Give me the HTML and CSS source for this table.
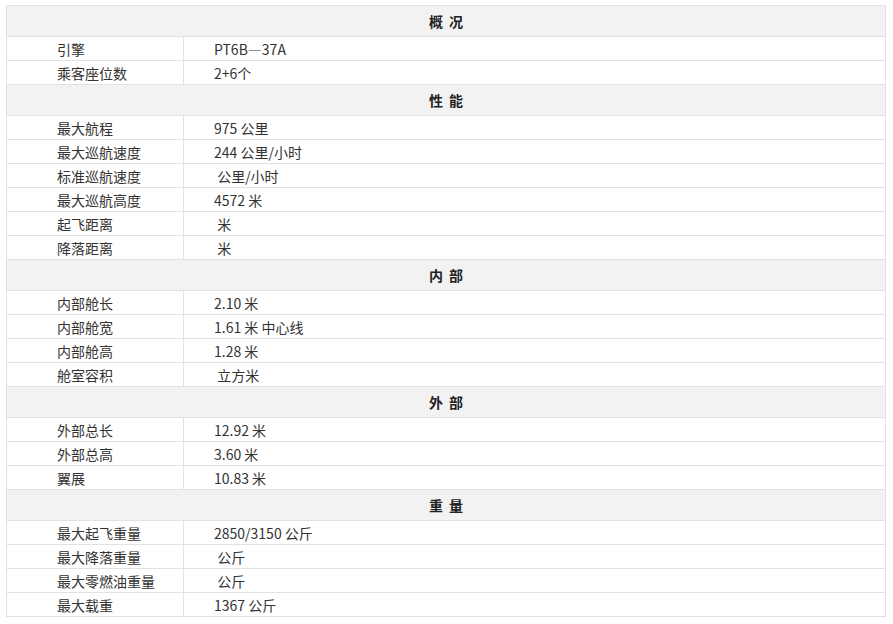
FILE: index.html
```html
<!DOCTYPE html>
<html lang="zh">
<head>
<meta charset="utf-8">
<link rel="stylesheet" href="styles.css">
</head>
<body>
<table class="spec">
  <tr class="sec"><th colspan="2">概 况</th></tr>
  <tr><td class="k">引擎</td><td class="v">PT6B—37A</td></tr>
  <tr><td class="k">乘客座位数</td><td class="v">2+6个</td></tr>
  <tr class="sec"><th colspan="2">性 能</th></tr>
  <tr><td class="k">最大航程</td><td class="v">975 公里</td></tr>
  <tr><td class="k">最大巡航速度</td><td class="v">244 公里/小时</td></tr>
  <tr><td class="k">标准巡航速度</td><td class="v">&nbsp;公里/小时</td></tr>
  <tr><td class="k">最大巡航高度</td><td class="v">4572 米</td></tr>
  <tr><td class="k">起飞距离</td><td class="v">&nbsp;米</td></tr>
  <tr><td class="k">降落距离</td><td class="v">&nbsp;米</td></tr>
  <tr class="sec"><th colspan="2">内 部</th></tr>
  <tr><td class="k">内部舱长</td><td class="v">2.10 米</td></tr>
  <tr><td class="k">内部舱宽</td><td class="v">1.61 米 中心线</td></tr>
  <tr><td class="k">内部舱高</td><td class="v">1.28 米</td></tr>
  <tr><td class="k">舱室容积</td><td class="v">&nbsp;立方米</td></tr>
  <tr class="sec"><th colspan="2">外 部</th></tr>
  <tr><td class="k">外部总长</td><td class="v">12.92 米</td></tr>
  <tr><td class="k">外部总高</td><td class="v">3.60 米</td></tr>
  <tr><td class="k">翼展</td><td class="v">10.83 米</td></tr>
  <tr class="sec"><th colspan="2">重 量</th></tr>
  <tr><td class="k">最大起飞重量</td><td class="v">2850/3150 公斤</td></tr>
  <tr><td class="k">最大降落重量</td><td class="v">&nbsp;公斤</td></tr>
  <tr><td class="k">最大零燃油重量</td><td class="v">&nbsp;公斤</td></tr>
  <tr><td class="k">最大载重</td><td class="v">1367 公斤</td></tr>
</table>
</body>
</html>
```
FILE: styles.css
```css
html, body {
  margin: 0;
  background: #fff;
}
body {
  padding: 5px 0 0 6px;
  font-family: "Noto Sans CJK SC", "Microsoft YaHei", sans-serif;
  font-size: 14px;
  color: #333;
}
.spec {
  width: 880px;
  border-collapse: collapse;
  border: 1px solid #e2e2e2;
}
.spec td, .spec th {
  border: 1px solid #e2e2e2;
  padding: 0;
  line-height: 22px;
  height: 24px;
  box-sizing: border-box;
}
.spec tr.sec th {
  height: 31px;
  background: #f2f2f2;
  font-weight: bold;
  color: #222;
  text-align: center;
  word-spacing: 3px;
}
.spec td.k {
  width: 177px;
  padding-left: 50px;
  box-sizing: border-box;
}
.spec td.v {
  padding-left: 30px;
}
```
